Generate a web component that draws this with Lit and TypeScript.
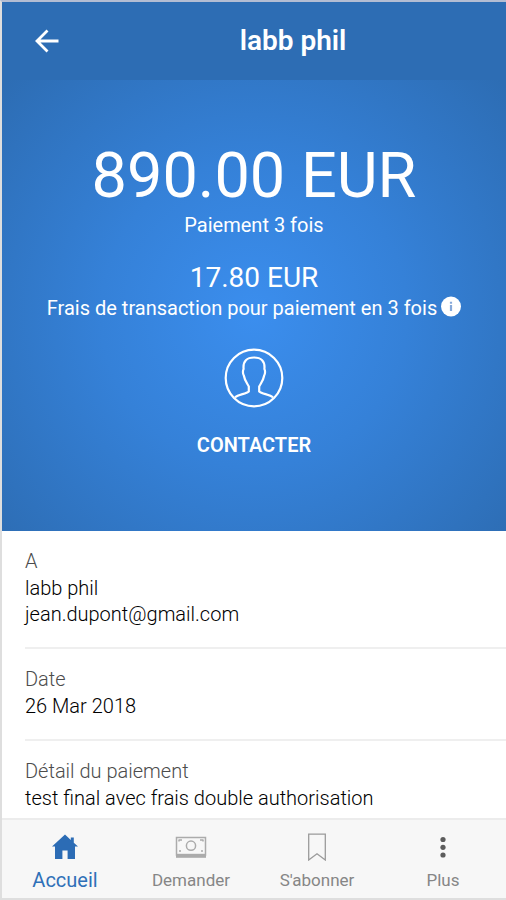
import { LitElement, html, css, svg } from "lit";
import { customElement, property } from "lit/decorators.js";
import { classMap } from "lit/directives/class-map.js";

const icons = {
  home: svg`<svg width="28" height="28" viewBox="0 0 28 28" fill="#2c6cb5" aria-hidden="true">
    <path d="M14 1.500 1 13.600h3V26h7.400v-8.600h5.200V26H24V13.600h3L22.800 9.700V4.500h-3v2.600Z"/>
  </svg>`,
  money: svg`<svg width="32" height="28" viewBox="0 0 32 28" fill="none" stroke="#ababab" aria-hidden="true">
    <rect x="1.500" y="4.500" width="29" height="17.500" stroke-width="1.500"/>
    <circle cx="16" cy="12.700" r="4.600" stroke-width="1.500"/>
    <path d="M4 7h3M4 6.500v2M28 7h-3M28 6.500v2M4 18h2M28 18h-2" stroke-width="1.500"/>
    <path d="M1 22.800h30" stroke-width="4"/>
  </svg>`,
  bookmark: svg`<svg width="20" height="28" viewBox="0 0 20 28" fill="none" stroke="#9b9b9b" stroke-width="1.300" aria-hidden="true">
    <path d="M1.700 1.200h16.600V27L10 20.800 1.700 27Z"/>
  </svg>`,
  more: svg`<svg width="8" height="28" viewBox="0 0 8 28" fill="#5c5c5c" aria-hidden="true">
    <circle cx="4" cy="6.500" r="2.600"/><circle cx="4" cy="14.300" r="2.600"/><circle cx="4" cy="22" r="2.600"/>
  </svg>`,
};

const tabs = [
  { icon: icons.home, label: "Accueil", active: true },
  { icon: icons.money, label: "Demander", active: false },
  { icon: icons.bookmark, label: "S'abonner", active: false },
  { icon: icons.more, label: "Plus", active: false },
];

@customElement("detail-row")
class DetailRow extends LitElement {
  @property() label = "";
  @property({ attribute: false }) lines: string[] = [];

  static styles = css`
    :host {
      display: block;
      padding: 17px 0 20px;
      border-bottom: 2px solid #efefef;
    }
    :host(:last-of-type) {
      border-bottom: 0;
      padding-bottom: 4px;
    }
    .label,
    .value {
      margin: 0;
      font-size: 20px;
      font-weight: 300;
    }
    .label {
      line-height: 27px;
      color: #4c4c4c;
    }
    .value {
      line-height: 26px;
      color: #000;
    }
  `;

  render() {
    return html`<h2 class="label">${this.label}</h2>
      ${this.lines.map((line) => html`<p class="value">${line}</p>`)}`;
  }
}

@customElement("app-root")
class AppRoot extends LitElement {
  static styles = css`
    :host {
      display: flex;
      flex-direction: column;
      min-height: 100vh;
      box-sizing: border-box;
      border: 2px solid #dedede;
      border-top-color: #b3bdd3;
      border-right: 0;
      background: #fff;
      font-family: Roboto, "Liberation Sans", sans-serif;
    }
    .bar {
      display: grid;
      grid-template-columns: 90px 1fr 12px;
      align-items: center;
      height: 78px;
      background: #2d6db4;
      color: #fff;
    }
    button {
      border: 0;
      padding: 0;
      background: none;
      color: inherit;
      font: inherit;
      cursor: pointer;
    }
    .back {
      justify-self: center;
      display: flex;
    }
    h1 {
      margin: 0;
      text-align: center;
      font-size: 28px;
      line-height: 32px;
      font-weight: 600;
    }
    .hero {
      display: flex;
      flex-direction: column;
      align-items: center;
      padding: 58px 16px 73px;
      color: #fff;
      text-align: center;
      background: radial-gradient(circle 340px at 50% 52%, #3b8eee 0%, #3581d8 45%, #2d6db4 100%);
    }
    .hero p {
      margin: 0;
    }
    .amount {
      font-size: 63px;
      line-height: 75px;
    }
    .caption {
      display: flex;
      align-items: center;
      gap: 4px;
      font-size: 20px;
      line-height: 24px;
    }
    .hero .fee {
      margin-top: 22px;
      font-size: 28px;
      line-height: 37px;
    }
    .info {
      display: flex;
    }
    .contact {
      display: flex;
      flex-direction: column;
      align-items: center;
      gap: 24px;
      margin-top: 28px;
      font-size: 20px;
      line-height: 26px;
      font-weight: 600;
    }
    .details {
      flex: 1;
      padding-left: 23px;
    }
    .tabs {
      display: grid;
      grid-template-columns: repeat(4, 1fr);
      border-top: 2px solid #ececec;
      background: #f7f7f7;
    }
    .tab {
      display: flex;
      flex-direction: column;
      align-items: center;
      gap: 6px;
      padding: 13px 0 5px;
      color: #868686;
      font-size: 17px;
      line-height: 26px;
      text-decoration: none;
    }
    .tab.active {
      color: #2f70b8;
      font-size: 20px;
    }
  `;

  render() {
    return html`
      <header class="bar">
        <button class="back" aria-label="Retour">
          <svg width="26" height="26" viewBox="0 0 26 26" fill="none" stroke="#fff" stroke-width="2.800">
            <path d="M24.500 13H3M13.500 2.500 3 13l10.500 10.500" />
          </svg>
        </button>
        <h1>labb phil</h1>
      </header>
      <section class="hero">
        <p class="amount">890.00 EUR</p>
        <p class="caption">Paiement 3 fois</p>
        <p class="fee">17.80 EUR</p>
        <div class="caption">
          <span>Frais de transaction pour paiement en 3 fois</span>
          <button class="info" aria-label="Informations">
            <svg width="20" height="24" viewBox="0 0 20 24">
              <circle cx="10" cy="10.500" r="10" fill="#fff" />
              <path d="M10 5.700v2M10 9.100v6" stroke="#86a9da" stroke-width="2.200" />
            </svg>
          </button>
        </div>
        <button class="contact">
          <svg width="60" height="60" viewBox="0 0 60 60" fill="none" stroke="#fff" stroke-width="2.200" aria-hidden="true">
            <circle cx="30" cy="30" r="28.300" />
            <path d="M11 49.500C14 46.500 22 46 24.800 43.500V38.500C23 35 20.500 32 19.800 27.500C18.800 26 18.600 22.500 19.600 21C18.800 13 23 9.500 30 9.500S41.200 13 40.400 21C41.400 22.500 41.200 26 40.200 27.500C39.500 32 37 35 35.200 38.500V43.500C38 46 46 46.500 49 49.500" />
          </svg>
          <span>CONTACTER</span>
        </button>
      </section>
      <main class="details">
        <detail-row label="A" .lines=${["labb phil", "jean.dupont@gmail.com"]}></detail-row>
        <detail-row label="Date" .lines=${["26 Mar 2018"]}></detail-row>
        <detail-row label="Détail du paiement" .lines=${["test final avec frais double authorisation"]}></detail-row>
      </main>
      <nav class="tabs">
        ${tabs.map(
          (tab) => html`<a href="#" class=${classMap({ tab: true, active: tab.active })}>${tab.icon}<span>${tab.label}</span></a>`
        )}
      </nav>
    `;
  }
}
